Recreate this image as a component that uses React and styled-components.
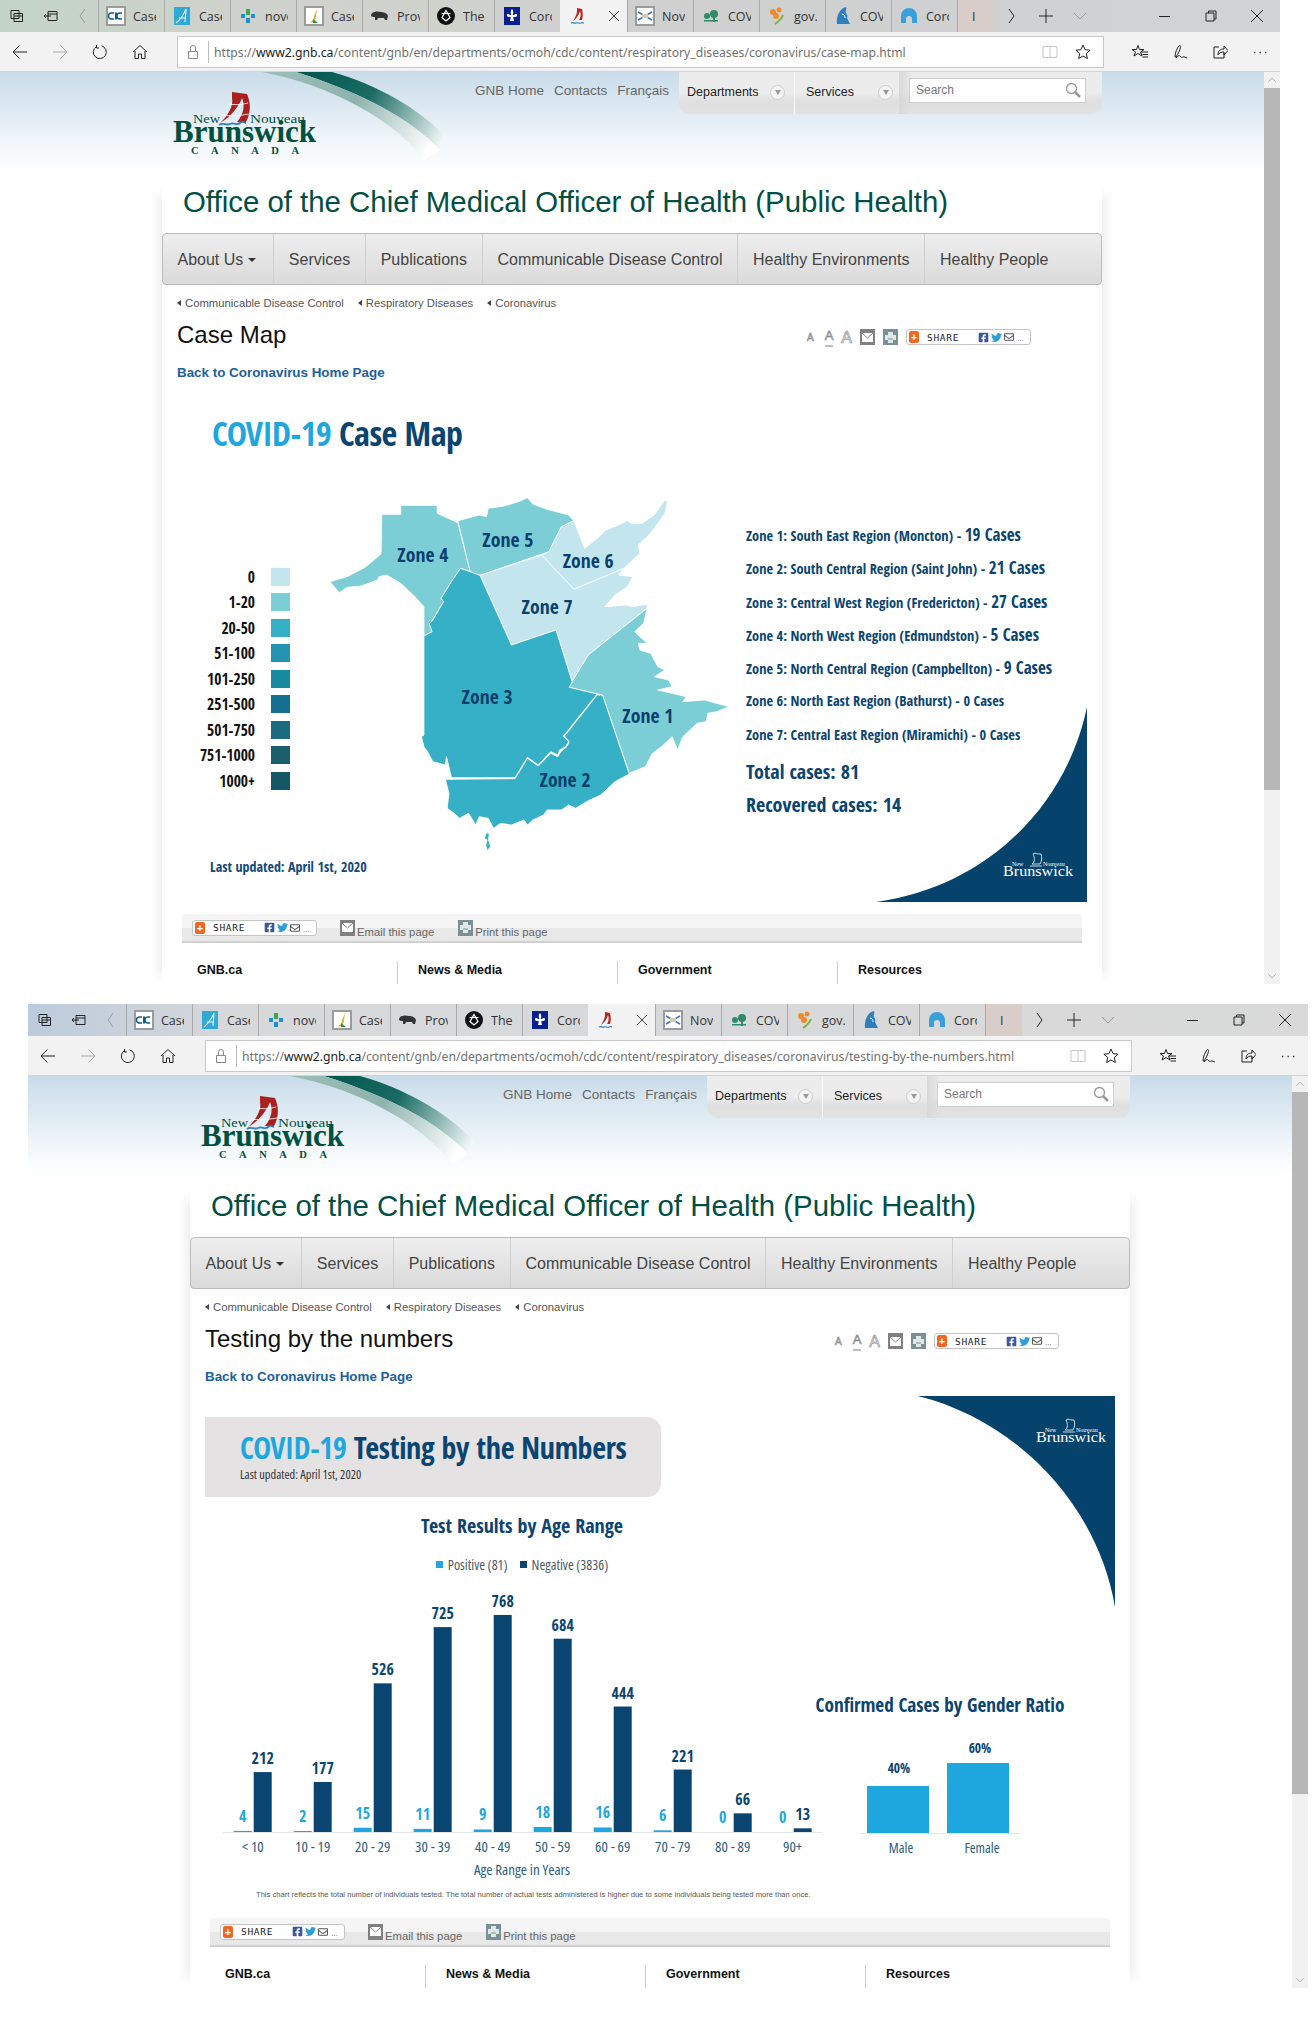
import styled, { createGlobalStyle } from 'styled-components';
import { FaFacebookSquare, FaTwitter, FaRegEnvelope } from 'react-icons/fa';

const narrow = `"Liberation Sans Narrow", "Noto Sans Condensed", "Open Sans Condensed", "DejaVu Sans Condensed", sans-serif`;
const navy = '#0a4470';
const sky = '#1ea7de';

const GlobalStyle = createGlobalStyle`
  html, body { margin: 0; padding: 0; background: #fff; }
  body { font-family: "Liberation Sans", Arial, sans-serif; width: 1312px; height: 2032px; overflow: hidden; }
`;

const Shot = styled.div`
  display: flex;
  flex-direction: column;
  gap: 20px;
`;

const Window = styled.section`
  width: 1280px;
  height: 984px;
  margin-left: ${p => p.$left}px;
  overflow: hidden;
`;

/* browser chrome */
const TabRow = styled.div`
  display: flex;
  height: 32px;
  background: ${p => p.$tint};
  color: #333;
`;
const ToolCluster = styled.div`
  display: flex;
  align-items: center;
  width: ${p => p.$width}px;
  flex: none;
`;
const StripButton = styled.div`
  display: flex;
  align-items: center;
  justify-content: center;
  width: ${p => p.$width || 34}px;
  height: 32px;
  flex: none;
  color: ${p => (p.$dim ? '#999' : '#222')};
`;
const Tab = styled.div`
  display: flex;
  align-items: center;
  width: ${p => p.$width}px;
  height: 32px;
  flex: none;
  box-sizing: border-box;
  padding-left: 7px;
  gap: 7px;
  overflow: hidden;
  border-left: 1px solid #a9a9a9;
  background: ${p => (p.$active ? '#f2f2f2' : p.$wash || 'transparent')};
  border-left-color: ${p => (p.$active ? 'transparent' : '#a9a9a9')};
`;
const TabLabel = styled.span`
  font: 12.5px "Open Sans", "Noto Sans", sans-serif;
  width: 23px;
  flex: none;
  overflow: hidden;
  white-space: nowrap;
`;
const TabClose = styled.div`
  display: flex;
  margin-left: 11px;
  color: #444;
`;
const Spacer = styled.div`
  flex: 1;
`;
const Toolbar = styled.div`
  display: flex;
  align-items: center;
  height: 40px;
  box-sizing: border-box;
  background: #f2f2f2;
  border-bottom: 1px solid #d4d4d4;
`;
const ToolButton = styled.div`
  display: flex;
  align-items: center;
  justify-content: center;
  width: 40px;
  height: 32px;
  flex: none;
  color: ${p => (p.$dim ? '#aaa' : '#222')};
`;
const Address = styled.div`
  display: flex;
  align-items: center;
  width: 927px;
  height: 32px;
  margin: 0 16px 0 17px;
  box-sizing: border-box;
  background: #fff;
  border: 1px solid #c9c9c9;
  flex: none;
`;
const LockCell = styled.div`
  display: flex;
  align-items: center;
  justify-content: center;
  width: 30px;
  height: 22px;
  color: #888;
  border-right: 1px solid #bbb;
`;
const Url = styled.div`
  flex: 1;
  padding: 2px 0 0 5px;
  font: 12.2px "Noto Sans", "Open Sans", sans-serif;
  color: #707070;
  white-space: nowrap;
  b { font-weight: 400; color: #222; }
`;
const AddressIcon = styled.div`
  display: flex;
  margin-right: ${p => p.$gap}px;
  color: ${p => p.$color};
`;

/* page */
const Viewport = styled.div`
  display: flex;
  height: 912px;
`;
const Canvas = styled.div`
  position: relative;
  width: 1264px;
  height: 912px;
  overflow: hidden;
  background: linear-gradient(180deg, #c9dcea 0, #f5f9fb 78px, #fff 100px);
`;
const Scrollbar = styled.div`
  display: flex;
  flex-direction: column;
  width: 16px;
  background: #f1f1f1;
  color: #888;
`;
const ScrollArrow = styled.div`
  display: flex;
  align-items: center;
  justify-content: center;
  height: 16px;
  flex: none;
`;
const ScrollThumb = styled.div`
  height: 702px;
  background: #b7b7b7;
  flex: none;
`;
const Masthead = styled.header`
  display: flex;
  height: 114px;
  padding: 0 162px 0 173px;
`;
const Logo = styled.svg`
  margin-top: 17px;
  position: relative;
  flex: none;
`;
const Swoosh = styled.svg`
  position: absolute;
  left: 0;
  top: 0;
`;
const TopLinks = styled.nav`
  display: flex;
  gap: 10px;
  margin-left: auto;
  padding: 11px 10px 0 0;
  font-size: 13.5px;
  color: #666;
  position: relative;
`;
const ToolPanel = styled.div`
  display: flex;
  width: 423px;
  height: 42px;
  flex: none;
  border-radius: 0 0 11px 11px;
  overflow: hidden;
  background: linear-gradient(180deg, #ececec 0, #ececec 50%, #dfdfdf 70%, #e2e2e2 100%);
  position: relative;
`;
const PanelMenu = styled.div`
  display: flex;
  align-items: center;
  width: ${p => p.$width}px;
  padding-left: ${p => p.$pad}px;
  box-sizing: border-box;
  flex: none;
  font-size: 12.5px;
  color: #222;
  padding-bottom: 2px;
  border-right: ${p => (p.$rule ? '1px solid #f8f8f8' : '0')};
`;
const Caret = styled.span`
  display: flex;
  align-items: center;
  justify-content: center;
  width: 15px;
  height: 15px;
  margin-left: auto;
  margin-right: ${p => p.$gap}px;
  border-radius: 50%;
  background: #f4f4f4;
  border: 1px solid #ccc;
  box-sizing: border-box;
  &::after {
    content: '';
    border: 3.5px solid transparent;
    border-top: 5px solid #999;
    margin-top: 4px;
  }
`;
const SearchArea = styled.div`
  flex: 1;
  padding: 6px 16px 0 10px;
  background: linear-gradient(90deg, #d8d8d8, rgba(232, 232, 232, 0) 14px);
`;
const SearchBox = styled.div`
  display: flex;
  align-items: center;
  justify-content: space-between;
  height: 25px;
  box-sizing: border-box;
  padding: 0 3px 2px 6px;
  background: #fff;
  border: 1px solid #cfcfcf;
  font-size: 12px;
  color: #777;
`;
const Column = styled.main`
  position: relative;
  width: 940px;
  height: 798px;
  margin-left: 162px;
  background: #fff;
  box-shadow: 12px 0 10px -8px rgba(0, 0, 0, 0.07), -12px 0 10px -8px rgba(0, 0, 0, 0.07);
`;
const OfficeTitle = styled.h1`
  margin: 0;
  height: 47px;
  padding: 0 0 0 21px;
  font-size: 29.4px;
  line-height: 31px;
  font-weight: 400;
  color: #014f45;
  white-space: nowrap;
`;
const MainNav = styled.nav`
  display: flex;
  height: 52px;
  box-sizing: border-box;
  border: 1px solid #bbb;
  border-radius: 4px;
  background: linear-gradient(180deg, #eeeeee, #dadada);
`;
const NavItem = styled.a`
  display: flex;
  align-items: center;
  gap: 6px;
  padding: 1px ${p => p.$pad || 15}px 0 14.5px;
  font-size: 16px;
  color: #444;
  white-space: nowrap;
  border-right: ${p => (p.$last ? '0' : '1px solid #cfcfcf')};
`;
const NavCaret = styled.span`
  border: 4px solid transparent;
  border-top: 4px solid #333;
  margin-top: 4px;
  margin-left: -1px;
`;
const Body = styled.div`
  padding: 0 15px;
`;
const Crumbs = styled.div`
  display: flex;
  height: 18px;
  margin-top: 9px;
  align-items: center;
  font-size: 11.3px;
  color: #555;
  gap: 14px;
`;
const Crumb = styled.a`
  display: flex;
  align-items: center;
  gap: 4px;
  &::before {
    content: '';
    border: 3.5px solid transparent;
    border-right: 4px solid #444;
    border-left: 0;
  }
`;
const TitleRow = styled.div`
  display: flex;
  height: 38px;
  margin-top: 4px;
  align-items: center;
`;
const PageTitle = styled.h2`
  margin: 0;
  font-size: 24px;
  font-weight: 400;
  color: #111;
`;
const PageTools = styled.div`
  display: flex;
  align-items: center;
  gap: 8px;
  margin-left: auto;
  margin-right: 56px;
  padding-top: 4px;
`;
const SizeA = styled.span`
  font-size: ${p => p.$size}px;
  line-height: 18px;
  margin-right: ${p => p.$space || 0}px;
  color: #fff;
  -webkit-text-stroke: 0.7px #8a8a8a;
  border-bottom: ${p => (p.$on ? '2px solid #bbb' : '0')};
  align-self: flex-end;
`;
const IconBox = styled.span`
  display: flex;
  align-items: center;
  justify-content: center;
  width: ${p => p.$width || 15}px;
  height: 16px;
  flex: none;
  background: ${p => p.$bg};
`;
const Share = styled.span`
  display: flex;
  align-items: center;
  width: 125px;
  height: 16px;
  flex: none;
  box-sizing: border-box;
  padding: 0 0 0 2px;
  border: 1px solid #c4c4c4;
  border-radius: 3px;
  background: #fff;
`;
const ShareMark = styled.span`
  display: flex;
  align-items: center;
  justify-content: center;
  width: 10px;
  height: 12px;
  border-radius: 2px;
  background: #f26522;
  color: #fff;
  font: 700 11px/12px "Liberation Sans", sans-serif;
`;
const ShareText = styled.span`
  margin: 0 19px 0 8px;
  font: 9.5px "DejaVu Sans Mono", "Liberation Mono", monospace;
  letter-spacing: 0.7px;
  color: #222;
`;
const ShareDots = styled.span`
  align-self: flex-end;
  margin-left: 3px;
  font-size: 8px;
  line-height: 10px;
  color: #666;
`;
const BackLink = styled.a`
  display: block;
  margin-top: 11px;
  height: 16px;
  font-size: 13.4px;
  line-height: 16px;
  font-weight: 700;
  color: #1b619c;
`;

/* infographics, text set condensed like the source art */
const Figure = styled.div`
  position: relative;
  display: flow-root;
  height: 527px;
  margin-top: 6px;
`;
const InfoTitle = styled.div`
  font: 700 ${p => p.$size}px/36px ${narrow};
  letter-spacing: ${p => p.$track}px;
  color: ${navy};
  white-space: nowrap;
  span { color: ${sky}; }
`;
const MapHeading = styled(InfoTitle)`
  padding: 28px 0 0 35px;
  height: 36px;
`;
const MapGrid = styled.div`
  display: flex;
  margin-top: 29px;
`;
const MapLeft = styled.div`
  width: 556px;
  margin-left: 13px;
  flex: none;
`;
const MapRow = styled.div`
  display: flex;
`;
const Legend = styled.div`
  width: 110px;
  padding-top: 84px;
  flex: none;
`;
const LegendRow = styled.div`
  display: flex;
  align-items: center;
  height: 25.5px;
  font: 700 15.5px ${narrow};
  color: #111;
`;
const LegendName = styled.span`
  width: 65px;
  text-align: right;
  white-space: nowrap;
`;
const Swatch = styled.span`
  width: 19px;
  height: 18px;
  margin-left: 16px;
  background: ${p => p.$color};
`;
const Updated = styled.div`
  margin: 2px 0 0 20px;
  font: 700 14px/20px ${narrow};
  color: #134b78;
`;
const ZoneList = styled.div`
  padding-top: 38px;
`;
const ZoneRow = styled.div`
  height: 33.3px;
  font: 700 14.3px/33.3px ${narrow};
  color: ${navy};
  white-space: nowrap;
  b { font-size: 17px; }
`;
const Totals = styled.div`
  height: 33px;
  margin-top: ${p => p.$gap || 0}px;
  font: 700 20px/33px ${narrow};
  color: ${navy};
`;
const Corner = styled.svg`
  position: absolute;
  right: 0;
  ${p => (p.$top ? 'top: 5px;' : 'bottom: 12px;')}
`;
const Banner = styled.div`
  width: 456px;
  height: 80px;
  box-sizing: border-box;
  margin-top: 26px;
  padding: 13px 0 0 35px;
  border-radius: 0 14px 14px 0;
  background: #e4e2e3;
`;
const BannerSub = styled.div`
  margin-top: 2px;
  font: 400 12.4px/14px "Open Sans", sans-serif;
  font-stretch: 75%;
  color: #333;
`;
const Charts = styled.div`
  display: flex;
  align-items: flex-end;
  margin-top: 17px;
  padding-left: 17px;
`;
const BarColumn = styled.div`
  display: flex;
  flex-direction: column;
  align-items: center;
  width: 600px;
  flex: none;
`;
const ChartTitle = styled.div`
  font: 700 ${p => p.$size}px/24px ${narrow};
  color: ${navy};
  white-space: nowrap;
`;
const KeyRow = styled.div`
  display: flex;
  align-items: center;
  height: 18px;
  margin: 17px 0 16px;
  font: 400 14px "Open Sans", sans-serif;
  font-stretch: 75%;
  color: #4e5a64;
`;
const KeyDot = styled.span`
  width: 7px;
  height: 7px;
  margin: 0 5px 0 ${p => p.$gap}px;
  background: ${p => p.$color};
`;
const GenderColumn = styled.div`
  display: flex;
  flex-direction: column;
  align-items: center;
  gap: 23px;
  width: 256px;
  margin: 0 0 24px -10px;
  flex: none;
`;
const ChartText = styled.text`
  font: 700 ${p => p.$size}px ${narrow};
  fill: ${p => p.$color};
  text-anchor: middle;
`;
const ChartCaption = styled.text`
  font: 400 ${p => p.$size}px "Open Sans", sans-serif;
  font-stretch: 75%;
  fill: #2b5d80;
  text-anchor: middle;
`;
const Note = styled.div`
  margin-top: 6px;
  padding-left: 51px;
  font: 7.6px "Liberation Sans", sans-serif;
  color: #555;
  white-space: nowrap;
`;
const ShareBar = styled.div`
  display: flex;
  align-items: center;
  height: 29px;
  box-sizing: border-box;
  margin: 0 5px;
  padding: 0 0 0 10px;
  border-bottom: 2px solid #d0d0d0;
  border-radius: 4px 4px 0 0;
  background: linear-gradient(180deg, #f5f5f5 0, #f5f5f5 52%, #e8e8e8 52%);
`;
const BarAction = styled.span`
  display: flex;
  align-items: flex-end;
  gap: 2px;
  margin-left: ${p => p.$gap}px;
  font-size: 11.3px;
  line-height: 12px;
  color: #666;
  white-space: nowrap;
`;
const BarActionText = styled.span`
  margin-bottom: -2px;
`;
const FooterRow = styled.div`
  display: flex;
  margin-top: 18px;
`;
const FooterCol = styled.div`
  width: 220px;
  height: 24px;
  box-sizing: border-box;
  padding-left: 20px;
  font-size: 12.5px;
  font-weight: 700;
  line-height: 18px;
  color: #111;
  border-left: ${p => (p.$first ? '0' : '1px solid #ccc')};
`;

const Ic = ({ size = 16, children, sw = 1 }) => (
  <svg width={size} height={size} viewBox="0 0 16 16" fill="none" stroke="currentColor" strokeWidth={sw}>
    {children}
  </svg>
);

const Favicon = ({ kind }) => {
  const box = { width: 20, height: 20, viewBox: '0 0 20 20' };
  switch (kind) {
    case 'cdc':
      return (
        <svg {...box}>
          <rect x="1" y="1" width="18" height="18" fill="#fff" stroke="#9b9b9b" strokeWidth="2" />
          <path d="M8 7H5.500a3 3 0 0 0 0 6H8" fill="none" stroke="#0b5e8c" strokeWidth="1.400" />
          <rect x="9" y="6.500" width="2" height="7" fill="#0b5e8c" />
          <path d="M16 7h-2a3 3 0 0 0 0 6h2" fill="none" stroke="#0b5e8c" strokeWidth="1.400" />
        </svg>
      );
    case 'script':
      return (
        <svg {...box}>
          <rect x="2" y="1" width="16" height="18" fill="#2fa9d6" />
          <path d="M4 17C9 13 12 8 14 3l-1 13M7 12h7" fill="none" stroke="#e8f6fb" strokeWidth="1.100" />
        </svg>
      );
    case 'cross':
      return (
        <svg {...box}>
          <rect x="8" y="3" width="4" height="6" fill="#3aa655" />
          <rect x="8" y="12" width="4" height="5" fill="#1f8fd0" />
          <rect x="3" y="8" width="4" height="4" fill="#1f8fd0" />
          <rect x="13" y="8" width="4" height="4" fill="#1f8fd0" />
        </svg>
      );
    case 'leaf':
      return (
        <svg {...box}>
          <rect x="1" y="1" width="18" height="18" fill="#fff" stroke="#9b9b9b" strokeWidth="2" />
          <path d="M13 3c-1 4-3 5-3 8s-3 4-4 6c3-1 6-3 6-6s1-5 1-8z" fill="#e0b030" />
          <path d="M9 13l5 4h-5z" fill="#2f8f3e" />
        </svg>
      );
    case 'bison':
      return (
        <svg {...box}>
          <path d="M1 10c0-3 2-4 4-4 2-1 4 0 6 0 3 0 6 1 7 4l-1 4h-2l-1-2H8l-1 2H5v-3H3z" fill="#333" />
        </svg>
      );
    case 'trillium':
      return (
        <svg {...box}>
          <circle cx="10" cy="10" r="9" fill="#111" />
          <path d="M10 4.500l4 7-4 3.500-4-3.500z" fill="none" stroke="#fff" strokeWidth="1.200" />
          <path d="M5.500 7.500h9" stroke="#fff" strokeWidth="1.100" />
        </svg>
      );
    case 'fleur':
      return (
        <svg {...box}>
          <rect x="2" y="1" width="16" height="18" fill="#0a1f8f" />
          <path d="M10 3c1.500 1.500 1.500 4 .7 6h1.300c1-2 4-1 3 1-.5 1-1.500 1-2 .8l-1.800.4.800 3.800H8l.8-3.800-1.800-.4c-.5.2-1.500.2-2-.8-1-2 2-3 3-1h1.300C8.500 7 8.500 4.500 10 3z" fill="#fff" />
        </svg>
      );
    case 'ship':
      return (
        <svg {...box}>
          <path d="M9 2l5 1c1 4 1 8 0 11h-3c2-3 2-6 1-9-1 4-4 8-7 10 2-3 4-7 4-10z" fill="#b12a22" />
          <path d="M3 17c2-1.500 3 1 5 0s3 1 5 0 2 0 3 0" fill="none" stroke="#2b7fc2" strokeWidth="1.200" />
        </svg>
      );
    case 'flag':
      return (
        <svg {...box}>
          <rect x="1" y="1" width="18" height="18" fill="#fff" stroke="#9b9b9b" strokeWidth="2" />
          <path d="M3 6l14 8M17 6L3 14" stroke="#3c78b4" strokeWidth="1.600" />
          <rect x="7" y="8" width="6" height="4" fill="#d8c8b0" />
        </svg>
      );
    case 'trees':
      return (
        <svg {...box}>
          <circle cx="13" cy="8" r="4" fill="#2f8a68" />
          <circle cx="6" cy="10" r="3" fill="#2f8a68" />
          <rect x="12" y="10" width="2" height="6" fill="#2f8a68" />
          <rect x="3" y="14" width="14" height="1.500" fill="#2f8a68" />
        </svg>
      );
    case 'flower':
      return (
        <svg {...box}>
          <circle cx="6" cy="6" r="3" fill="#ef8a2f" />
          <circle cx="12" cy="4" r="2.500" fill="#ef8a2f" />
          <circle cx="9" cy="10" r="3" fill="#ef8a2f" />
          <path d="M8 18c3-2 6-4 8-9" stroke="#79b342" strokeWidth="2" fill="none" />
        </svg>
      );
    case 'pei':
      return (
        <svg {...box}>
          <path d="M4 18C3 10 7 2 13 1c1 3-1 4 0 6s2 3 1 5l3 6z" fill="#2d80bf" />
          <path d="M9 8c2 0 3 2 3 4" stroke="#fff" fill="none" />
        </svg>
      );
    case 'arc':
      return (
        <svg {...box}>
          <path d="M2 17V10a8 8 0 0 1 16 0v7h-5v-4a3 3 0 0 0-6 0v4z" fill="#3aa0dc" />
        </svg>
      );
    default:
      return (
        <svg {...box}>
          <path d="M3 14c2-5 4-7 7-8 3 1 5 3 7 8z" fill="#efb62f" />
          <path d="M10 3v3M4 6l2 3M16 6l-2 3" stroke="#efb62f" strokeWidth="1.500" />
        </svg>
      );
  }
};

const tabs = [
  ['cdc', 'Case Map'], ['script', 'Case Map'], ['cross', 'novel'], ['leaf', 'Case Map'], ['bison', 'Province'],
  ['trillium', 'The 2019'], ['fleur', 'Coronavirus'], ['ship', null], ['flag', 'Novel'], ['trees', 'COVID'],
  ['flower', 'gov.bc'], ['pei', 'COVID'], ['arc', 'Coronavirus'], ['sun', 'I'],
];

const BrowserChrome = ({ tint, path }) => (
  <>
    <TabRow $tint={tint}>
      <ToolCluster $width={98}>
        <StripButton>
          <Ic><path d="M2 2.500h8v8H2zM5 5.500h8.500v8H5zM5 8h8.500" /></Ic>
        </StripButton>
        <StripButton>
          <Ic><path d="M5 3.500h9v9H5zM5 6h9M1 8h7M3 6L1 8l2 2" /></Ic>
        </StripButton>
        <StripButton $width={28} $dim>
          <Ic><path d="M11 1L6 8l5 7" /></Ic>
        </StripButton>
      </ToolCluster>
      {tabs.map(([kind, label], i) => {
        const isShip = label === null;
        const isLast = i === tabs.length - 1;
        return (
          <Tab key={i} $active={isShip} $width={isShip ? 67 : isLast ? 37 : 66} $wash={isLast ? '#d8cdc8' : undefined}>
            <Favicon kind={kind} />
            {isShip ? (
              <TabClose><Ic><path d="M3 3l10 10M13 3L3 13" /></Ic></TabClose>
            ) : (
              <TabLabel>{label}</TabLabel>
            )}
          </Tab>
        );
      })}
      <StripButton $width={1} />
      <StripButton><Ic><path d="M5 1l5 7-5 7" /></Ic></StripButton>
      <StripButton><Ic><path d="M8 1v14M1 8h14" /></Ic></StripButton>
      <StripButton $dim><Ic><path d="M2 5l6 6 6-6" /></Ic></StripButton>
      <Spacer />
      <StripButton $width={46}><Ic><path d="M2 8.500h11" /></Ic></StripButton>
      <StripButton $width={46}><Ic><path d="M3 5h8v8H3zM5.500 5V3H13v8h-2" /></Ic></StripButton>
      <StripButton $width={46}><Ic><path d="M2 2l12 12M14 2L2 14" /></Ic></StripButton>
    </TabRow>
    <Toolbar>
      <ToolButton><Ic><path d="M15 8H1M7.500 1.500L1 8l6.500 6.500" /></Ic></ToolButton>
      <ToolButton $dim><Ic><path d="M1 8h14M8.500 1.500L15 8l-6.500 6.500" /></Ic></ToolButton>
      <ToolButton><Ic><path d="M9.500 1.800A6.500 6.500 0 1 1 4.500 2.500M4.500 1v3H7" /></Ic></ToolButton>
      <ToolButton><Ic><path d="M1 8l7-6.500L15 8M3 7v7.500h3.500V10h3v4.500H13V7" /></Ic></ToolButton>
      <Address>
        <LockCell>
          <Ic><path d="M3.500 7.500h9v7h-9zM5.500 7.500V4a2.500 2.500 0 0 1 5 0v3.500" /></Ic>
        </LockCell>
        <Url>https://<b>www2.gnb.ca</b>/content/gnb/en/departments/ocmoh/cdc/content/respiratory_diseases/coronavirus/{path}</Url>
        <AddressIcon $gap={17} $color="#c4c4c4">
          <Ic><path d="M1 2.500h6.500l.5.500.5-.5H15v11H8.500L8 14l-.5-.5H1zM8 3v10.500" /></Ic>
        </AddressIcon>
        <AddressIcon $gap={12} $color="#222">
          <Ic><path d="M8 1l2.100 4.700 5 .5-3.800 3.300 1.100 5L8 12l-4.400 2.500 1.100-5L.9 6.200l5-.5z" /></Ic>
        </AddressIcon>
      </Address>
      <ToolButton>
        <Ic><path d="M6 1.500l1.500 4H12L8.500 8 10 12 6 9.500 2 12l1.500-4L0 5.500h4.500zM9 8h7M10.500 10.500H16M10.500 13H16" /></Ic>
      </ToolButton>
      <ToolButton>
        <Ic><path d="M3 13c0-4 2-9 4-11 1-1 2 0 1.500 1.500C8 6 6 10 4 13zM4 14c2-2 3-3 4-2s2 2 3 1 3 1 4 1" /></Ic>
      </ToolButton>
      <ToolButton>
        <Ic><path d="M7 3H2v11h10V9M6 11c0-4 2-6 6-6V2l4 4.500-4 4.500V8c-3 0-5 1-6 3z" /></Ic>
      </ToolButton>
      <ToolButton>
        <Ic sw={1.400}><path d="M2 8.500h1.300M7.500 8.500h1.300M13 8.500h1.300" /></Ic>
      </ToolButton>
    </Toolbar>
  </>
);

const GnbLogo = () => (
  <Logo width="144" height="68" viewBox="0 0 144 68">
    <path d="M59 3l15 2c4 9 4 19-1 28h-9c7-8 8-17 5-24-3 8-11 19-22 25 7-6 14-17 12-25z" fill="#a8201f" />
    <path d="M56 15c5 1 12 1 19-1M50 26c7 1 16 1 26-1" fill="none" stroke="#fff" strokeWidth="1" opacity="0.8" />
    <path d="M46 36c4-3 7 1 11-1s7 2 10-1 4 0 6 0" fill="none" stroke="#2f7fc4" strokeWidth="1.800" />
    <text x="20" y="34" fill="#00503f" fontFamily="Liberation Serif" fontSize="13" textLength="27" lengthAdjust="spacingAndGlyphs">New</text>
    <text x="77" y="34" fill="#00503f" fontFamily="Liberation Serif" fontSize="13" textLength="55" lengthAdjust="spacingAndGlyphs">Nouveau</text>
    <text x="0" y="53" fill="#00503f" fontFamily="Liberation Serif" fontSize="31" fontWeight="700" textLength="143" lengthAdjust="spacingAndGlyphs">Brunswick</text>
    <text x="18" y="65" fill="#00503f" fontFamily="Liberation Serif" fontSize="10.500" fontWeight="700" textLength="108">C A N A D A</text>
  </Logo>
);

const SwooshArt = ({ id }) => (
  <Swoosh width="460" height="100" viewBox="0 0 460 100">
    <defs>
      <linearGradient id={id + 'a'} gradientUnits="userSpaceOnUse" x1="300" y1="0" x2="445" y2="75">
        <stop offset="0" stopColor="#00564d" />
        <stop offset="0.45" stopColor="#1a6c63" />
        <stop offset="1" stopColor="#fff" />
      </linearGradient>
      <linearGradient id={id + 'b'} gradientUnits="userSpaceOnUse" x1="270" y1="0" x2="425" y2="85">
        <stop offset="0" stopColor="#9bbcb7" />
        <stop offset="0.5" stopColor="#8fb3ae" />
        <stop offset="1" stopColor="#fff" />
      </linearGradient>
    </defs>
    <path d="M296 0H332C378 13 418 36 446 65L440 78C410 46 360 20 296 0Z" fill={`url(#${id}a)`} />
    <path d="M262 0H296C360 20 410 46 440 78L424 88C395 48 330 13 262 0Z" fill={`url(#${id}b)`} />
  </Swoosh>
);

const ShareButton = () => (
  <Share>
    <ShareMark>+</ShareMark>
    <ShareText>SHARE</ShareText>
    <FaFacebookSquare size={11} color="#3b5998" />
    <FaTwitter size={11} color="#2c9fd6" style={{ marginLeft: 2 }} />
    <FaRegEnvelope size={10} color="#555" style={{ marginLeft: 2 }} />
    <ShareDots>...</ShareDots>
  </Share>
);

const MailIcon = () => (
  <IconBox $bg="#808080">
    <svg width="11" height="9" viewBox="0 0 11 9"><path d="M0 0h11v9H0z" fill="#fff" /><path d="M0 0l5.500 5L11 0" fill="none" stroke="#888" /></svg>
  </IconBox>
);
const PrintIcon = () => (
  <IconBox $bg="#7b9094">
    <svg width="11" height="11" viewBox="0 0 11 11"><path d="M3 0h5v3H3zM0 3h11v5H0zM3 7h5v4H3z" fill="#dfe7e8" /><path d="M3 7h5" stroke="#7b9094" /></svg>
  </IconBox>
);

const PageFrame = ({ title, children, id }) => (
  <Canvas>
    <SwooshArt id={id} />
    <Masthead>
      <GnbLogo />
      <TopLinks>
        <span>GNB Home</span>
        <span>Contacts</span>
        <span>Français</span>
      </TopLinks>
      <ToolPanel>
        <PanelMenu $width={116} $pad={8} $rule>Departments<Caret $gap={9} /></PanelMenu>
        <PanelMenu $width={104} $pad={11}>Services<Caret $gap={6} /></PanelMenu>
        <SearchArea>
          <SearchBox>
            Search
            <svg width="18" height="18" viewBox="0 0 18 18" fill="none">
              <circle cx="7.500" cy="7.500" r="5" stroke="#999" strokeWidth="1.300" fill="#fbfbfb" />
              <path d="M11 11l5 5" stroke="#999" strokeWidth="2.500" />
            </svg>
          </SearchBox>
        </SearchArea>
      </ToolPanel>
    </Masthead>
    <Column>
      <OfficeTitle>Office of the Chief Medical Officer of Health (Public Health)</OfficeTitle>
      <MainNav>
        <NavItem $pad={17}>About Us <NavCaret /></NavItem>
        <NavItem>Services</NavItem>
        <NavItem>Publications</NavItem>
        <NavItem>Communicable Disease Control</NavItem>
        <NavItem>Healthy Environments</NavItem>
        <NavItem $last>Healthy People</NavItem>
      </MainNav>
      <Body>
        <Crumbs>
          <Crumb>Communicable Disease Control</Crumb>
          <Crumb>Respiratory Diseases</Crumb>
          <Crumb>Coronavirus</Crumb>
        </Crumbs>
        <TitleRow>
          <PageTitle>{title}</PageTitle>
          <PageTools>
            <SizeA $size={10} $space={3}>A</SizeA>
            <SizeA $size={13} $on>A</SizeA>
            <SizeA $size={16}>A</SizeA>
            <MailIcon />
            <PrintIcon />
            <ShareButton />
          </PageTools>
        </TitleRow>
        <BackLink>Back to Coronavirus Home Page</BackLink>
        {children}
        <ShareBar>
          <ShareButton />
          <BarAction $gap={23}><MailIcon /><BarActionText>Email this page</BarActionText></BarAction>
          <BarAction $gap={24}><PrintIcon /><BarActionText>Print this page</BarActionText></BarAction>
        </ShareBar>
        <FooterRow>
          <FooterCol $first>GNB.ca</FooterCol>
          <FooterCol>News &amp; Media</FooterCol>
          <FooterCol>Government</FooterCol>
          <FooterCol>Resources</FooterCol>
        </FooterRow>
      </Body>
    </Column>
  </Canvas>
);

const legend = [
  ['0', '#c3e6ee'], ['1-20', '#7cced6'], ['20-50', '#36b0c6'], ['51-100', '#2594b3'], ['101-250', '#178aa0'],
  ['251-500', '#156f91'], ['501-750', '#1b6a7f'], ['751-1000', '#1c5f6c'], ['1000+', '#155766'],
];

const zones = [
  ['Zone 1: South East Region (Moncton) - ', '19 Cases', true],
  ['Zone 2: South Central Region (Saint John) - ', '21 Cases', true],
  ['Zone 3: Central West Region (Fredericton) - ', '27 Cases', true],
  ['Zone 4: North West Region (Edmundston) - ', '5 Cases', true],
  ['Zone 5: North Central Region (Campbellton) - ', '9 Cases', true],
  ['Zone 6: North East Region (Bathurst) - ', '0 Cases', false],
  ['Zone 7: Central East Region (Miramichi) - ', '0 Cases', false],
];

const zoneShapes = [
  ['#7cced6', 'M392 305 440 290 490 262 535 222 537 103 590 103 590 76 692 76 692 100 750 128 785 275 758 265 735 300 703 355 710 365 680 420 670 432 678 455 655 468 655 380 625 345 590 310 550 285 530 290 525 300 480 318 440 322 418 338Z'],
  ['#7cced6', 'M750 122 810 105 830 110 835 85 880 78 920 65 945 53 960 72 1000 88 1060 105 1075 122 1040 140 1005 215 812 286 785 278Z'],
  ['#c3e6ee', 'M1075 122 1085 150 1098 185 1105 205 1140 175 1165 150 1200 135 1225 122 1235 130 1265 130 1300 105 1330 60 1337 65 1330 100 1300 145 1285 165 1255 195 1260 220 1240 240 1215 265 1075 328 985 225 1005 215 1040 140Z'],
  ['#c3e6ee', 'M812 286 985 225 1075 328 1215 265 1200 285 1240 290 1225 320 1190 345 1170 370 1160 380 1220 375 1240 380 1280 372 1280 385 1115 525 1070 605 1025 450 900 495Z'],
  ['#7cced6', 'M1280 385 1270 430 1245 455 1280 490 1255 490 1260 510 1290 520 1310 560 1330 570 1300 590 1340 600 1350 620 1310 630 1390 650 1380 665 1440 660 1510 680 1475 695 1450 700 1445 725 1420 730 1395 755 1380 770 1365 810 1350 770 1320 800 1295 820 1275 860 1230 880 1155 645 1140 642 1062 622 1070 605 1115 525Z'],
  ['#36b0c6', 'M758 265 812 286 900 495 1025 450 1070 605 1062 622 1140 642 1052 760 1045 768 1060 785 1052 800 1035 810 1030 825 1010 815 975 855 945 832 910 893 732 893 718 830 715 855 680 845 665 815 655 800 648 770 655 765 655 468 678 455 670 432 680 420 710 365 703 355 735 300Z'],
  ['#36b0c6', 'M1140 645 1155 645 1230 882 1190 905 1150 945 1110 965 1080 985 1060 975 1040 990 1000 990 990 1005 960 1020 945 1035 935 1020 900 1035 870 1030 850 1045 835 1015 810 1010 800 1035 780 1000 755 1015 740 1000 720 985 725 940 715 898 910 896 945 835 975 858 1010 820 1030 830 1038 815 1055 800 1062 785 1048 768 1055 760Z'],
  ['#36b0c6', 'M830 1058 838 1060 836 1080 842 1100 832 1112 828 1095 832 1080 824 1075Z'],
];

const zoneLabels = [
  ['Zone 4', 652, 225], ['Zone 5', 890, 180], ['Zone 6', 1115, 243], ['Zone 7', 1000, 380],
  ['Zone 3', 832, 652], ['Zone 1', 1282, 707], ['Zone 2', 1050, 900],
];

const ProvinceMap = () => (
  <svg width="446" height="375" viewBox="110 0 446 375" style={{ flex: 'none' }}>
    <g transform="scale(0.35714 0.33333)">
      {zoneShapes.map(([fill, d], i) => (
        <path key={i} d={d} fill={fill} stroke="#fff" strokeWidth="2.500" strokeLinejoin="round" />
      ))}
    </g>
    {zoneLabels.map(([name, x, y]) => (
      <ChartText key={name} $size={19} $color="#093f6d" x={x * 0.35714} y={y * 0.33333 + 7} textLength="51" lengthAdjust="spacingAndGlyphs">
        {name}
      </ChartText>
    ))}
  </svg>
);

const CornerLogo = ({ x, y }) => (
  <g fill="#fff" fontFamily="Liberation Serif">
    <path d={`M${x + 29} ${y + 11}c3-2 3-6 1-10l2-1c1 1 5 1 6 1 1 3 1 7-1 10zM${x + 27} ${y + 13}h12`} fill="none" stroke="#fff" strokeWidth="0.800" />
    <text x={x + 9} y={y + 13} fontSize="6">New</text>
    <text x={x + 40} y={y + 13} fontSize="6">Nouveau</text>
    <text x={x} y={y + 23} fontSize="15" textLength="70" lengthAdjust="spacingAndGlyphs">Brunswick</text>
  </g>
);

const CaseMapFigure = () => (
  <Figure>
    <MapHeading $size={34} $track={-0.55}><span>COVID-19</span> Case Map</MapHeading>
    <MapGrid>
      <MapLeft>
        <MapRow>
          <Legend>
            {legend.map(([name, color]) => (
              <LegendRow key={name}>
                <LegendName>{name}</LegendName>
                <Swatch $color={color} />
              </LegendRow>
            ))}
          </Legend>
          <ProvinceMap />
        </MapRow>
        <Updated>Last updated: April 1st, 2020</Updated>
      </MapLeft>
      <ZoneList>
        {zones.map(([name, count, big]) => (
          <ZoneRow key={name}>{name}{big ? <b>{count}</b> : count}</ZoneRow>
        ))}
        <Totals $gap={4}>Total cases: 81</Totals>
        <Totals>Recovered cases: 14</Totals>
      </ZoneList>
    </MapGrid>
    <Corner width="211" height="195" viewBox="0 0 211 195">
      <path d="M211 0C190 100 110 180 0 195H211Z" fill="#05426c" />
      <CornerLogo x={127} y={146} />
    </Corner>
  </Figure>
);

const ageBars = [
  ['< 10', 4, 212], ['10 - 19', 2, 177], ['20 - 29', 15, 526], ['30 - 39', 11, 725], ['40 - 49', 9, 768],
  ['50 - 59', 18, 684], ['60 - 69', 16, 444], ['70 - 79', 6, 221], ['80 - 89', 0, 66], ['90+', 0, 13],
];
const px = 0.2826;
const base = 243;

const AgeChart = () => (
  <svg width="600" height="295" viewBox="0 0 600 295">
    <path d="M1 243.500H600" stroke="#e6e6e6" />
    {ageBars.map(([age, pos, neg], i) => {
      const start = 11.7 + i * 60;
      const posH = Math.max(pos * px, pos ? 1 : 0);
      const negH = neg * px;
      return (
        <g key={age}>
          <rect x={start} y={base - posH} width="18" height={posH} fill={sky} />
          <rect x={start + 20} y={base - negH} width="18" height={negH} fill={navy} />
          <ChartText $size={16} $color={sky} x={start + 9} y={base - posH - 9}>{pos}</ChartText>
          <ChartText $size={16} $color={navy} x={start + 29} y={base - negH - 8}>{neg}</ChartText>
          <ChartCaption $size={15} x={start + 19} y={263}>{age}</ChartCaption>
        </g>
      );
    })}
    <ChartCaption $size={15} x="300" y="286">Age Range in Years</ChartCaption>
  </svg>
);

const GenderChart = () => (
  <svg width="160" height="120" viewBox="0 0 160 120">
    <path d="M0 93.500H160" stroke="#e6e6e6" />
    <rect x="7" y="46" width="62" height="47" fill={sky} />
    <rect x="87" y="23" width="62" height="70" fill={sky} />
    <ChartText $size={13.5} $color={navy} x="39" y="33">40%</ChartText>
    <ChartText $size={13.5} $color={navy} x="120" y="13">60%</ChartText>
    <ChartCaption $size={14} x="41" y="113">Male</ChartCaption>
    <ChartCaption $size={14} x="122" y="113">Female</ChartCaption>
  </svg>
);

const TestingFigure = () => (
  <Figure>
    <Corner $top width="197" height="211" viewBox="0 0 197 211">
      <path d="M0 0H197V211C180 110 100 25 0 0Z" fill="#05426c" />
      <CornerLogo x={118} y={23} />
    </Corner>
    <Banner>
      <InfoTitle $size={30} $track={-0.3}><span>COVID-19</span> Testing by the Numbers</InfoTitle>
      <BannerSub>Last updated: April 1st, 2020</BannerSub>
    </Banner>
    <Charts>
      <BarColumn>
        <ChartTitle $size={20}>Test Results by Age Range</ChartTitle>
        <KeyRow>
          <KeyDot $color={sky} $gap={0} />Positive (81)
          <KeyDot $color={navy} $gap={12} />Negative (3836)
        </KeyRow>
        <AgeChart />
      </BarColumn>
      <GenderColumn>
        <ChartTitle $size={19.2}>Confirmed Cases by Gender Ratio</ChartTitle>
        <GenderChart />
      </GenderColumn>
    </Charts>
    <Note>This chart reflects the total number of individuals tested. The total number of actual tests administered is higher due to some individuals being tested more than once.</Note>
  </Figure>
);

const Browser = ({ left, tint, path, title, id, children }) => (
  <Window $left={left}>
    <BrowserChrome tint={tint} path={path} />
    <Viewport>
      <PageFrame title={title} id={id}>{children}</PageFrame>
      <Scrollbar>
        <ScrollArrow><Ic size={10} ><path d="M2 11l6-6 6 6" /></Ic></ScrollArrow>
        <ScrollThumb />
        <Spacer />
        <ScrollArrow><Ic size={10}><path d="M2 5l6 6 6-6" /></Ic></ScrollArrow>
      </Scrollbar>
    </Viewport>
  </Window>
);

export default function App() {
  return (
    <Shot>
      <GlobalStyle />
      <Browser
        left={0}
        id="one"
        title="Case Map"
        path="case-map.html"
        tint="linear-gradient(90deg, #c3d4c7 0, #cfd2cc 240px, #cfd0d0 60%, #d0d2d4 100%)"
      >
        <CaseMapFigure />
      </Browser>
      <Browser
        left={28}
        id="two"
        title="Testing by the numbers"
        path="testing-by-the-numbers.html"
        tint="linear-gradient(90deg, #bccbdc 0, #d6d8da 200px, #d9d9d9 100%)"
      >
        <TestingFigure />
      </Browser>
    </Shot>
  );
}
